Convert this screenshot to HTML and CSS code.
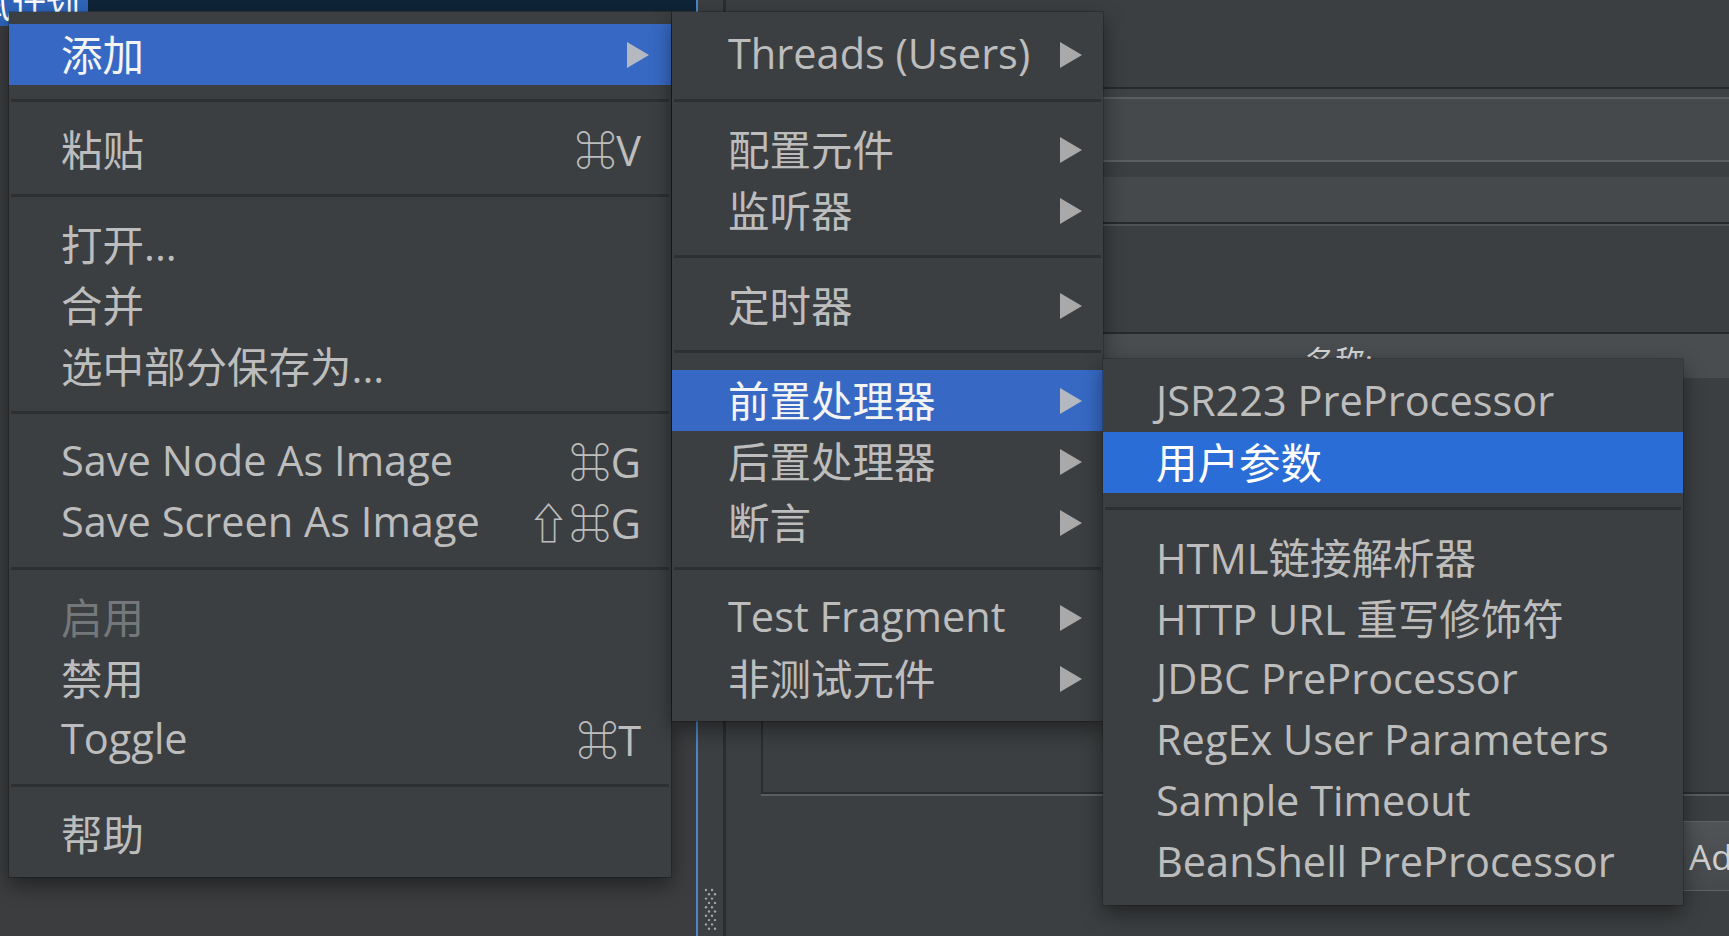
FILE: index.html
```html
<!DOCTYPE html>
<html lang="zh-CN">
<head>
<meta charset="utf-8">
<title>JMeter menu</title>
<link rel="stylesheet" href="styles.css">
</head>
<body>
<div class="app">
  <div class="tree">
    <div class="tree-row">
      <div class="node"><span class="node-text">测试计划</span></div>
      <div class="row-sel"></div>
    </div>
  </div>
  <div class="vline"></div>
  <div class="splitter">
    <svg class="grip" width="14" height="44" viewBox="0 0 14 44">
      <g fill="#a4a4a4">
        <circle cx="3" cy="2" r="1.2"/><circle cx="9" cy="2" r="1.2"/>
        <circle cx="6" cy="6.3" r="1.2"/><circle cx="12" cy="6.3" r="1.2"/>
        <circle cx="3" cy="10.6" r="1.2"/><circle cx="9" cy="10.6" r="1.2"/>
        <circle cx="6" cy="14.9" r="1.2"/><circle cx="12" cy="14.9" r="1.2"/>
        <circle cx="3" cy="19.2" r="1.2"/><circle cx="9" cy="19.2" r="1.2"/>
        <circle cx="6" cy="23.5" r="1.2"/><circle cx="12" cy="23.5" r="1.2"/>
        <circle cx="3" cy="27.8" r="1.2"/><circle cx="9" cy="27.8" r="1.2"/>
        <circle cx="6" cy="32.1" r="1.2"/><circle cx="12" cy="32.1" r="1.2"/>
        <circle cx="3" cy="36.4" r="1.2"/><circle cx="9" cy="36.4" r="1.2"/>
        <circle cx="6" cy="40.7" r="1.2"/><circle cx="12" cy="40.7" r="1.2"/>
      </g>
    </svg>
  </div>
  <div class="divider"></div>
  <div class="main">
    <div class="band b-top"></div>
    <div class="rule dark"></div>
    <div class="band b-a"></div>
    <div class="rule light"></div>
    <div class="band field h61"></div>
    <div class="rule light"></div>
    <div class="band b-gap"></div>
    <div class="band field h45"></div>
    <div class="rule dark"></div>
    <div class="rule light2"></div>
    <div class="band b-mid"></div>
    <div class="rule dark"></div>
    <div class="namebar">名称:</div>
    <div class="content">
      <div class="box"></div>
      <div class="btn-row"><div class="btn">Add</div></div>
    </div>
  </div>
</div>

<div class="menu m1">
  <div class="item sel"><span class="label">添加</span><span class="arrow"></span></div>
  <div class="sep"></div>
  <div class="item"><span class="label">粘贴</span><span class="key">⌘V</span></div>
  <div class="sep"></div>
  <div class="item"><span class="label">打开...</span></div>
  <div class="item"><span class="label">合并</span></div>
  <div class="item"><span class="label">选中部分保存为...</span></div>
  <div class="sep"></div>
  <div class="item"><span class="label">Save Node As Image</span><span class="key">⌘G</span></div>
  <div class="item"><span class="label">Save Screen As Image</span><span class="key">⇧⌘G</span></div>
  <div class="sep"></div>
  <div class="item dis"><span class="label">启用</span></div>
  <div class="item"><span class="label">禁用</span></div>
  <div class="item"><span class="label">Toggle</span><span class="key">⌘T</span></div>
  <div class="sep"></div>
  <div class="item"><span class="label">帮助</span></div>
</div>

<div class="menu m2">
  <div class="item"><span class="label">Threads (Users)</span><span class="arrow"></span></div>
  <div class="sep"></div>
  <div class="item"><span class="label">配置元件</span><span class="arrow"></span></div>
  <div class="item"><span class="label">监听器</span><span class="arrow"></span></div>
  <div class="sep"></div>
  <div class="item"><span class="label">定时器</span><span class="arrow"></span></div>
  <div class="sep"></div>
  <div class="item sel"><span class="label">前置处理器</span><span class="arrow"></span></div>
  <div class="item"><span class="label">后置处理器</span><span class="arrow"></span></div>
  <div class="item"><span class="label">断言</span><span class="arrow"></span></div>
  <div class="sep"></div>
  <div class="item"><span class="label">Test Fragment</span><span class="arrow"></span></div>
  <div class="item"><span class="label">非测试元件</span><span class="arrow"></span></div>
</div>

<div class="menu m3">
  <div class="item"><span class="label">JSR223 PreProcessor</span></div>
  <div class="item active"><span class="label">用户参数</span></div>
  <div class="sep"></div>
  <div class="item"><span class="label">HTML链接解析器</span></div>
  <div class="item"><span class="label">HTTP URL 重写修饰符</span></div>
  <div class="item"><span class="label">JDBC PreProcessor</span></div>
  <div class="item"><span class="label">RegEx User Parameters</span></div>
  <div class="item"><span class="label">Sample Timeout</span></div>
  <div class="item"><span class="label">BeanShell PreProcessor</span></div>
</div>
</body>
</html>
```

FILE: styles.css
```css
* { box-sizing: border-box; }
html, body { margin: 0; padding: 0; }
body {
  width: 1729px;
  height: 936px;
  overflow: hidden;
  position: relative;
  background: #3c3f41;
  font-family: "Open Sans", "Noto Sans CJK SC", "DejaVu Sans", sans-serif;
}

.app { display: flex; width: 1729px; height: 936px; overflow: hidden; }

.tree { flex: none; width: 696px; background: #3b3d3f; display: flex; flex-direction: column; }
.tree-row { display: flex; align-items: flex-start; }
.node {
  flex: none;
  width: 88px; height: 26px;
  background: #2f66bb;
  overflow: hidden;
  color: #ffffff;
  font-size: 34px; line-height: 34px;
}
.node-text { display: block; white-space: nowrap; margin: -12px 0 0 -56px; }
.row-sel { flex: 1; height: 11px; background: #0f2538; }

.vline { flex: none; width: 2px; background: #4a86c8; }
.splitter {
  flex: none;
  width: 25px;
  background: #3c3f41;
  display: flex; flex-direction: column; justify-content: flex-end;
  padding: 0 0 4px 5px;
}
.grip { display: block; }
.divider { flex: none; width: 3px; background: #2b2d2f; }

.main { flex: 1; min-width: 0; display: flex; flex-direction: column; background: #3c3f41; overflow: hidden; }
.band { flex: none; }
.b-top { height: 87px; background: #3c3f41; }
.b-a { height: 8px; background: #3f4244; }
.field { background: #46494b; }
.h61 { height: 61px; }
.h45 { height: 45px; }
.b-gap { height: 15px; background: #3c3f41; }
.b-mid { height: 106px; background: #3c3f41; }
.rule { height: 2px; flex: none; }
.rule.dark { background: #28292b; }
.rule.light { background: #5c5f61; }
.rule.light2 { background: #505355; }

.namebar {
  height: 44px; flex: none;
  background: #4a4d50;
  color: #d6d6d6;
  font-size: 30px; line-height: 34px;
  padding: 10px 0 0 579px;
  white-space: nowrap;
}
.content { flex: 1; padding: 22px 0 0 35px; display: flex; flex-direction: column; }
.box {
  flex: none;
  height: 394px;
  border-left: 2px solid #2b2d2f;
  border-bottom: 2px solid #2b2d2f;
  box-shadow: 0 2px 0 #5a5d5f;
}
.btn-row { display: flex; margin-top: 27px; }
.btn {
  margin-left: 904px;
  width: 160px; height: 70px;
  flex: none;
  display: flex; align-items: center;
  padding-left: 23px;
  background: linear-gradient(#505456, #46494b);
  border: 1px solid #5f6365;
  color: #cfcfcf;
  font-size: 35px;
}

/* Menus (overlays) */
.menu {
  position: absolute;
  background: #3c3f41;
  padding: 12px 0;
  box-shadow: 0 0 0 1px rgba(0,0,0,0.18), 0 8px 20px rgba(0,0,0,0.45);
}
.m1 { left: 9px; top: 12px; width: 662px; }
.m2 { left: 672px; top: 12px; width: 431px; }
.m3 { left: 1103px; top: 359px; width: 580px; }

.item {
  height: 61px;
  display: flex; align-items: center;
  color: #bdbdbd;
  font-size: 41.5px;
  white-space: nowrap;
  padding-bottom: 3px;
}
.m1 .item { padding-left: 52px; padding-right: 22px; }
.m2 .item { padding-left: 56px; padding-right: 21px; }
.m3 .item { padding-left: 53px; padding-right: 20px; }
.label { flex: 1; }
.key { margin-right: 8px; }
.arrow {
  width: 0; height: 0;
  border-left: 22px solid #a9a9a9;
  border-top: 13px solid transparent;
  border-bottom: 13px solid transparent;
  margin-top: 3px;
}
.item.sel { background: #3769c4; color: #f4f4f4; }
.item.sel .arrow { border-left-color: #b4b8c0; }
.item.active { background: #2a6dd6; color: #ffffff; }
.item.dis { color: #75787a; }

.sep { height: 34px; padding: 14px 2px 0; }
.sep::before { content: ""; display: block; height: 3px; background: #2d2f31; }
```
